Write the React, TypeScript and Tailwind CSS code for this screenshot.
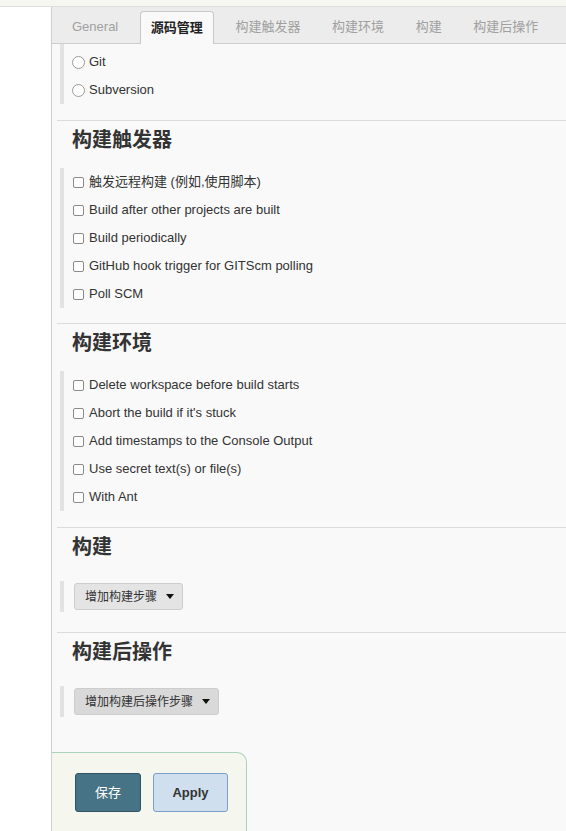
import React from "react";

const tabs = ["General", "源码管理", "构建触发器", "构建环境", "构建", "构建后操作"];

const triggers = [
  "触发远程构建 (例如,使用脚本)",
  "Build after other projects are built",
  "Build periodically",
  "GitHub hook trigger for GITScm polling",
  "Poll SCM",
];

const envOptions = [
  "Delete workspace before build starts",
  "Abort the build if it's stuck",
  "Add timestamps to the Console Output",
  "Use secret text(s) or file(s)",
  "With Ant",
];

const Caret = () => (
  <svg width="8" height="5" viewBox="0 0 8 5" className="ml-[9px]">
    <polygon points="0,0 8,0 4,5" fill="#111" />
  </svg>
);

const Divider = () => <div className="ml-[5px] border-t border-[#dcdcdc]" />;

const Heading = ({ children }: { children: React.ReactNode }) => (
  <h2 className="mt-[7px] mb-[16px] h-[24px] pl-[20px] text-[20px] leading-[24px] font-bold text-[#333]">
    {children}
  </h2>
);

const CheckList = ({ items }: { items: string[] }) => (
  <div className="ml-[8px] border-l-4 border-[#e2e2e2]">
    {items.map((label) => (
      <label key={label} className="flex h-[28px] items-center pl-[9px] text-[13px] text-[#333]">
        <span className="h-[11px] w-[11px] rounded-[2px] border border-[#8a8a8a] bg-white" />
        <span className="ml-[5px]">{label}</span>
      </label>
    ))}
  </div>
);

const StepButton = ({ label, dark }: { label: string; dark?: boolean }) => (
  <div className="ml-[8px] border-l-4 border-[#e2e2e2] py-[2px] pl-[10px]">
    <button
      className={`flex h-[27px] items-center rounded-[3px] border border-[#cdcdcd] pl-[10px] pr-[8px] text-[12px] text-[#333] ${
        dark ? "bg-[#d9d9d9]" : "bg-[#e4e4e4]"
      }`}
    >
      {label}
      <Caret />
    </button>
  </div>
);

export default function App() {
  return (
    <div
      className="h-[831px] w-[566px] overflow-hidden bg-white"
      style={{ fontFamily: '"Liberation Sans", "Noto Sans CJK SC", sans-serif' }}
    >
      {/* top strip */}
      <div className="h-[7px] border-b border-[#dedede] bg-[#f5f7f0]" />

      <div className="flex">
        <div className="w-[51px] shrink-0 bg-white" />

        <div className="flex min-h-[824px] flex-1 flex-col border-l border-[#cfcfcf] bg-[#f9f9f9]">
          {/* tab bar */}
          <div className="flex h-[37px] items-end gap-[11.6px] border-b border-[#cdcdcd] bg-[#ececec] pl-[10px]">
            {tabs.map((t, i) =>
              i === 1 ? (
                <div
                  key={t}
                  className="-mb-px flex h-[33px] items-center rounded-t-[4px] border border-b-0 border-[#c9c9c9] bg-[#f9f9f9] px-[10px] text-[13px] font-bold text-[#222]"
                >
                  {t}
                </div>
              ) : (
                <div key={t} className="flex h-[32px] items-center px-[10px] text-[13px] text-[#a0a0a0]">
                  {t}
                </div>
              )
            )}
          </div>

          {/* source control */}
          <div className="ml-[8px] border-l-4 border-[#e2e2e2] pt-[4px]">
            {["Git", "Subversion"].map((r) => (
              <label key={r} className="flex h-[28px] items-center pl-[8px] text-[13px] text-[#333]">
                <span className="h-[13px] w-[13px] rounded-full border border-[#9a9a9a] bg-white" />
                <span className="ml-[4px]">{r}</span>
              </label>
            ))}
          </div>

          <div className="mt-[16px]">
            <Divider />
            <Heading>构建触发器</Heading>
            <CheckList items={triggers} />
          </div>

          <div className="mt-[15px]">
            <Divider />
            <Heading>构建环境</Heading>
            <CheckList items={envOptions} />
          </div>

          <div className="mt-[16px]">
            <Divider />
            <Heading>构建</Heading>
            <div className="mt-[22px]">
              <StepButton label="增加构建步骤" />
            </div>
          </div>

          <div className="mt-[20px]">
            <Divider />
            <Heading>构建后操作</Heading>
            <div className="mt-[22px]">
              <StepButton label="增加构建后操作步骤" dark />
            </div>
          </div>

          {/* save / apply */}
          <div className="mt-[35px] flex h-[120px] w-[195px] gap-[12px] rounded-tr-[10px] border-t border-r border-[#a9d2bc] bg-[#f5f7ef] pl-[23px] pt-[20px]">
            <button className="h-[39px] w-[66px] rounded-[3px] border border-[#2f5564] bg-[#467385] text-[13px] text-white">
              保存
            </button>
            <button className="h-[39px] w-[75px] rounded-[3px] border border-[#79a0cc] bg-[#cfdfee] text-[13px] font-bold text-[#333]">
              Apply
            </button>
          </div>
        </div>
      </div>
    </div>
  );
}
